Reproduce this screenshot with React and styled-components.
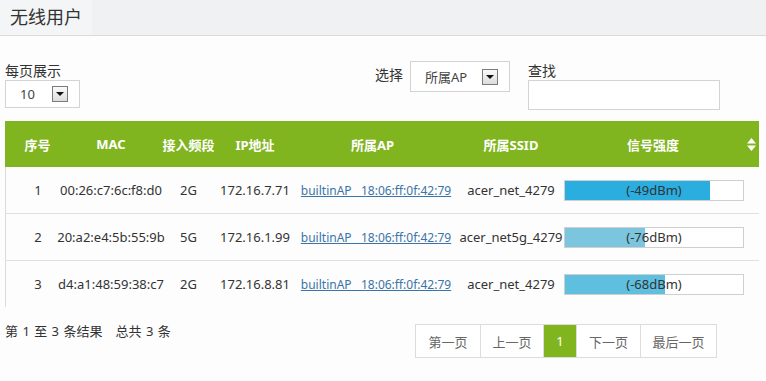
import { styled, createGlobalStyle } from "styled-components";

const GlobalStyle = createGlobalStyle`
  html, body {
    margin: 0;
    padding: 0;
    background: #fdfdfd;
  }
  body {
    font-family: "Noto Sans", "Noto Sans CJK SC", sans-serif;
    font-size: 13px;
    color: #333;
  }
`;

const GREEN = "#80b51f";

const Page = styled.div`
  width: 766px;
  height: 381px;
  overflow: hidden;
`;
const TitleBar = styled.div`
  height: 35px;
  background: #f0f1f2;
  border-bottom: 1px solid #dadada;
  display: flex;
`;
const Title = styled.h1`
  margin: 0;
  padding: 0 10px;
  font-size: 18px;
  font-weight: normal;
  line-height: 35px;
  color: #333;
  background: #f4f5f6;
`;
const Body = styled.div`
  padding: 0 7px 0 5px;
`;
const Controls = styled.div`
  display: flex;
  align-items: flex-start;
  height: 85px;
`;
const Field = styled.div`
  display: flex;
  flex-direction: column;
  width: ${(p) => p.$width}px;
  padding-top: ${(p) => p.$top}px;
`;
const Label = styled.label`
  font-size: 14px;
  line-height: 18px;
  color: #333;
`;
const Select = styled.div`
  box-sizing: border-box;
  width: ${(p) => p.$width}px;
  height: ${(p) => p.$height}px;
  border: 1px solid #d3d3d3;
  background: #fff;
  display: flex;
  align-items: center;
  justify-content: space-between;
  padding: 0 11px 0 ${(p) => p.$pad}px;
  font-size: 13px;
  color: #444;
`;
const ArrowBox = styled.span`
  box-sizing: border-box;
  width: 16px;
  height: 16px;
  border: 1px solid #7a7a7a;
  background: linear-gradient(#fafafa, #dcdcdc);
  display: flex;
  align-items: center;
  justify-content: center;
  &::after {
    content: "";
    border-left: 4px solid transparent;
    border-right: 4px solid transparent;
    border-top: 4px solid #111;
  }
`;
const ChooseGroup = styled.div`
  display: flex;
  align-items: flex-start;
  gap: 7px;
  padding-top: 25px;
  width: 153px;
`;
const ChooseLabel = styled.span`
  font-size: 14px;
  line-height: 18px;
  padding-top: 5px;
`;
const SearchInput = styled.input`
  box-sizing: border-box;
  width: 192px;
  height: 30px;
  border: 1px solid #d3d3d3;
  background: #fff;
  outline: none;
`;
const Table = styled.div`
  width: 754px;
  display: grid;
  grid-template-columns: 65px 82px 73px 60px 175px 102px 182px 15px;
`;
const HeadCell = styled.div`
  height: 46px;
  background: ${GREEN};
  color: #fff;
  font-weight: bold;
  font-size: 13px;
  display: flex;
  align-items: center;
  justify-content: center;
  white-space: nowrap;
`;
const Cell = styled.div`
  height: 46px;
  border-bottom: ${(p) => (p.$last ? "none" : "1px solid #e0e0e0")};
  border-left: ${(p) => (p.$first ? "1px solid #dcdcdc" : "none")};
  display: flex;
  align-items: center;
  justify-content: ${(p) => (p.$start ? "flex-start" : "center")};
  padding-left: ${(p) => p.$pl || 0}px;
  white-space: nowrap;
  font-size: 13px;
  color: #333;
`;
const ApLink = styled.a`
  color: #3a74a8;
  font-size: 12px;
  text-decoration: underline;
  white-space: pre;
  margin-left: 7px;
`;
const Bar = styled.div`
  box-sizing: border-box;
  position: relative;
  width: 180px;
  height: 21px;
  border: 1px solid #cfcfcf;
  background: #fff;
  display: flex;
  align-items: center;
  justify-content: center;
`;
const BarFill = styled.div`
  position: absolute;
  left: 0;
  top: 0;
  bottom: 0;
  background: ${(p) => p.$color};
`;
const BarText = styled.span`
  position: relative;
  color: #333;
  font-size: 13px;
`;
const Footer = styled.div`
  display: flex;
  align-items: flex-start;
  justify-content: space-between;
  padding-top: 17px;
  width: 712px;
`;
const Summary = styled.div`
  font-size: 13px;
  color: #333;
  margin-top: -3px;
  word-spacing: 1px;
`;
const Pager = styled.div`
  display: flex;
  border: 1px solid #dcdcdc;
`;
const PageBtn = styled.div`
  box-sizing: border-box;
  height: 32px;
  width: ${(p) => p.$width}px;
  display: flex;
  align-items: center;
  justify-content: center;
  font-size: 13px;
  color: ${(p) => (p.$active ? "#fff" : "#666")};
  background: ${(p) => (p.$active ? GREEN : "#fff")};
  border-left: ${(p) => (p.$first ? "none" : "1px solid #dcdcdc")};
`;

const SortIcon = () => (
  <svg width="9" height="13" viewBox="0 0 9 13">
    <path d="M4.5 0 L9 5.5 H0 Z" fill="#fff" />
    <path d="M0 7.5 H9 L4.5 13 Z" fill="#fff" />
  </svg>
);

const headers = ["序号", "MAC", "接入频段", "IP地址", "所属AP", "所属SSID", "信号强度"];

const rows = [
  { id: 1, mac: "00:26:c7:6c:f8:d0", band: "2G", ip: "172.16.7.71", ssid: "acer_net_4279", dbm: -49, fill: 145, color: "#2aaee0" },
  { id: 2, mac: "20:a2:e4:5b:55:9b", band: "5G", ip: "172.16.1.99", ssid: "acer_net5g_4279", dbm: -76, fill: 80, color: "#7cc5de" },
  { id: 3, mac: "d4:a1:48:59:38:c7", band: "2G", ip: "172.16.8.81", ssid: "acer_net_4279", dbm: -68, fill: 100, color: "#5ebfdf" },
];

export default function App() {
  return (
    <Page>
      <GlobalStyle />
      <TitleBar>
        <Title>无线用户</Title>
      </TitleBar>
      <Body>
        <Controls>
          <Field $width={370} $top={26}>
            <Label>每页展示</Label>
            <Select $width={75} $height={28} $pad={14}>
              10
              <ArrowBox />
            </Select>
          </Field>
          <ChooseGroup>
            <ChooseLabel>选择</ChooseLabel>
            <Select $width={100} $height={31} $pad={14}>
              所属AP
              <ArrowBox />
            </Select>
          </ChooseGroup>
          <Field $width={192} $top={26}>
            <Label>查找</Label>
            <SearchInput />
          </Field>
        </Controls>
        <Table>
          {headers.map((h) => (
            <HeadCell key={h}>{h}</HeadCell>
          ))}
          <HeadCell>
            <SortIcon />
          </HeadCell>
          {rows.map((r, i) => {
            const last = i === rows.length - 1;
            return [
              <Cell key={`a${r.id}`} $first $last={last}>{r.id}</Cell>,
              <Cell key={`b${r.id}`} $last={last}>{r.mac}</Cell>,
              <Cell key={`c${r.id}`} $last={last}>{r.band}</Cell>,
              <Cell key={`d${r.id}`} $last={last}>{r.ip}</Cell>,
              <Cell key={`e${r.id}`} $last={last}>
                <ApLink href="#">{"builtinAP   18:06:ff:0f:42:79"}</ApLink>
              </Cell>,
              <Cell key={`f${r.id}`} $last={last}>{r.ssid}</Cell>,
              <Cell key={`g${r.id}`} $last={last} $start $pl={2}>
                <Bar>
                  <BarFill $color={r.color} style={{ width: r.fill }} />
                  <BarText>({r.dbm}dBm)</BarText>
                </Bar>
              </Cell>,
              <Cell key={`h${r.id}`} $last={last} />,
            ];
          })}
        </Table>
        <Footer>
          <Summary>第 1 至 3 条结果&nbsp;&nbsp;&nbsp;总共 3 条</Summary>
          <Pager>
            <PageBtn $first $width={64}>第一页</PageBtn>
            <PageBtn $width={63}>上一页</PageBtn>
            <PageBtn $width={33} $active>1</PageBtn>
            <PageBtn $width={64}>下一页</PageBtn>
            <PageBtn $width={76}>最后一页</PageBtn>
          </Pager>
        </Footer>
      </Body>
    </Page>
  );
}
